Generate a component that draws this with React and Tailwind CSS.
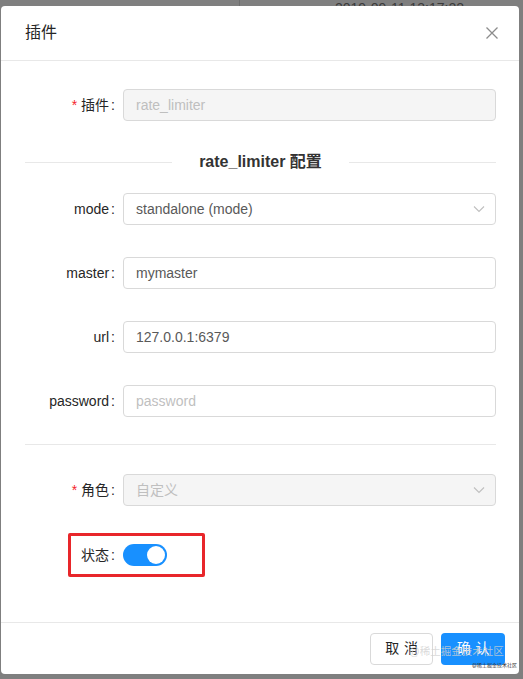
import React from "react";

const font = { fontFamily: '"Liberation Sans", "Noto Sans CJK SC", sans-serif' };

const Chevron = () => (
  <svg width="12" height="8" viewBox="0 0 12 8" fill="none" stroke="#bfbfbf" strokeWidth="1.1">
    <path d="M1 1.5l5 5 5-5" />
  </svg>
);

const Label = ({ required, children }) => (
  <div className="w-[98px] shrink-0 flex items-center justify-end pr-[8px] text-[14px] text-[#262626]">
    {required && <span className="text-[#f5222d] mr-[4px] text-[14px]">*</span>}
    <span>{children}</span>
    <span className="ml-[2px]">:</span>
  </div>
);

const Row = ({ label, required, children }) => (
  <div className="flex items-center h-[32px]">
    <Label required={required}>{label}</Label>
    <div className="flex-1">{children}</div>
  </div>
);

const Input = ({ value, placeholder, disabled }) => (
  <div
    className={`h-[32px] rounded-[4px] border border-[#d9d9d9] px-[12px] flex items-center text-[14px] ${
      disabled ? "bg-[#f5f5f5]" : "bg-white"
    }`}
  >
    {value ? (
      <span className={disabled ? "text-[#bfbfbf]" : "text-[#595959]"}>{value}</span>
    ) : (
      <span className="text-[#bfbfbf]">{placeholder}</span>
    )}
  </div>
);

const Select = ({ value, disabled }) => (
  <div
    className={`h-[32px] rounded-[4px] border border-[#d9d9d9] pl-[12px] pr-[10px] flex items-center justify-between text-[14px] ${
      disabled ? "bg-[#f5f5f5] text-[#bfbfbf]" : "bg-white text-[#595959]"
    }`}
  >
    <span>{value}</span>
    <Chevron />
  </div>
);

export default function App() {
  return (
    <div className="w-[523px] h-[679px] bg-[#7f7f7f] overflow-hidden relative" style={font}>
      {/* table behind the overlay */}
      <div className="h-[6px] relative overflow-hidden">
        <div className="absolute left-[239px] top-0 w-[1px] h-[6px] bg-[#6e6e6e]" />
        <div className="absolute left-[335px] top-[1px] text-[14px] leading-[14px] text-[#3a3a3a]">
          2019-09-11 13:17:22
        </div>
      </div>

      <div className="ml-[1px] w-[518px] h-[668px] bg-white rounded-[4px] flex flex-col">
        {/* header */}
        <div className="h-[55px] border-b border-[#e8e8e8] flex items-center justify-between pl-[24px] pr-[20px] shrink-0">
          <span className="text-[16px] text-[#262626]">插件</span>
          <svg width="14" height="14" viewBox="0 0 14 14" stroke="#8c8c8c" strokeWidth="1.3" fill="none">
            <path d="M1.5 1.5l11 11M12.5 1.5l-11 11" />
          </svg>
        </div>

        {/* body */}
        <div className="flex-1 pl-[24px] pr-[23px] pt-[28px]">
          <Row label="插件" required>
            <Input value="rate_limiter" disabled />
          </Row>

          <div className="flex items-center h-[22px] mt-[30px]">
            <div className="flex-1 h-px bg-[#e8e8e8]" />
            <span className="px-[27px] text-[16px] font-bold text-[#333]">rate_limiter 配置</span>
            <div className="flex-1 h-px bg-[#e8e8e8]" />
          </div>

          <div className="flex flex-col gap-[32px] mt-[20px]">
            <Row label="mode">
              <Select value="standalone (mode)" />
            </Row>
            <Row label="master">
              <Input value="mymaster" />
            </Row>
            <Row label="url">
              <Input value="127.0.0.1:6379" />
            </Row>
            <Row label="password">
              <Input placeholder="password" />
            </Row>
          </div>

          <div className="h-px bg-[#e8e8e8] mt-[27px]" />

          <div className="mt-[29px]">
            <Row label="角色" required>
              <Select value="自定义" disabled />
            </Row>
          </div>

          <div className="mt-[27px] ml-[43px] w-[137px] h-[44px] border-[3px] border-[#e8262a] rounded-[2px] flex items-center">
            <span className="ml-[10px] text-[14px] text-[#262626]">状态</span>
            <span className="ml-[2px] mr-[8px] text-[14px] text-[#262626]">:</span>
            <div className="w-[44px] h-[22px] rounded-full bg-[#1890ff] relative">
              <div className="absolute right-[2px] top-[2px] w-[18px] h-[18px] rounded-full bg-white" />
            </div>
          </div>
        </div>

        {/* footer */}
        <div className="h-[52px] border-t border-[#e8e8e8] flex items-center justify-end gap-[8px] pr-[14px] shrink-0 relative">
          <button className="w-[63px] h-[32px] rounded-[4px] border border-[#d9d9d9] bg-white text-[14px] text-[#262626] tracking-[0.34em] pl-[5px]">
            取消
          </button>
          <button className="w-[64px] h-[32px] rounded-[4px] bg-[#1890ff] text-white text-[14px] tracking-[0.34em] pl-[5px]">
            确认
          </button>
          <span className="absolute left-[408px] top-[22px] text-[10.5px] leading-[12px] text-[#d0d0d0]/80 whitespace-nowrap pointer-events-none">
            @稀土掘金技术社区
          </span>
          <span className="absolute left-[471px] top-[40px] text-[5px] leading-[5px] text-[#333] whitespace-nowrap pointer-events-none">
            @稀土掘金技术社区
          </span>
        </div>
      </div>
    </div>
  );
}
